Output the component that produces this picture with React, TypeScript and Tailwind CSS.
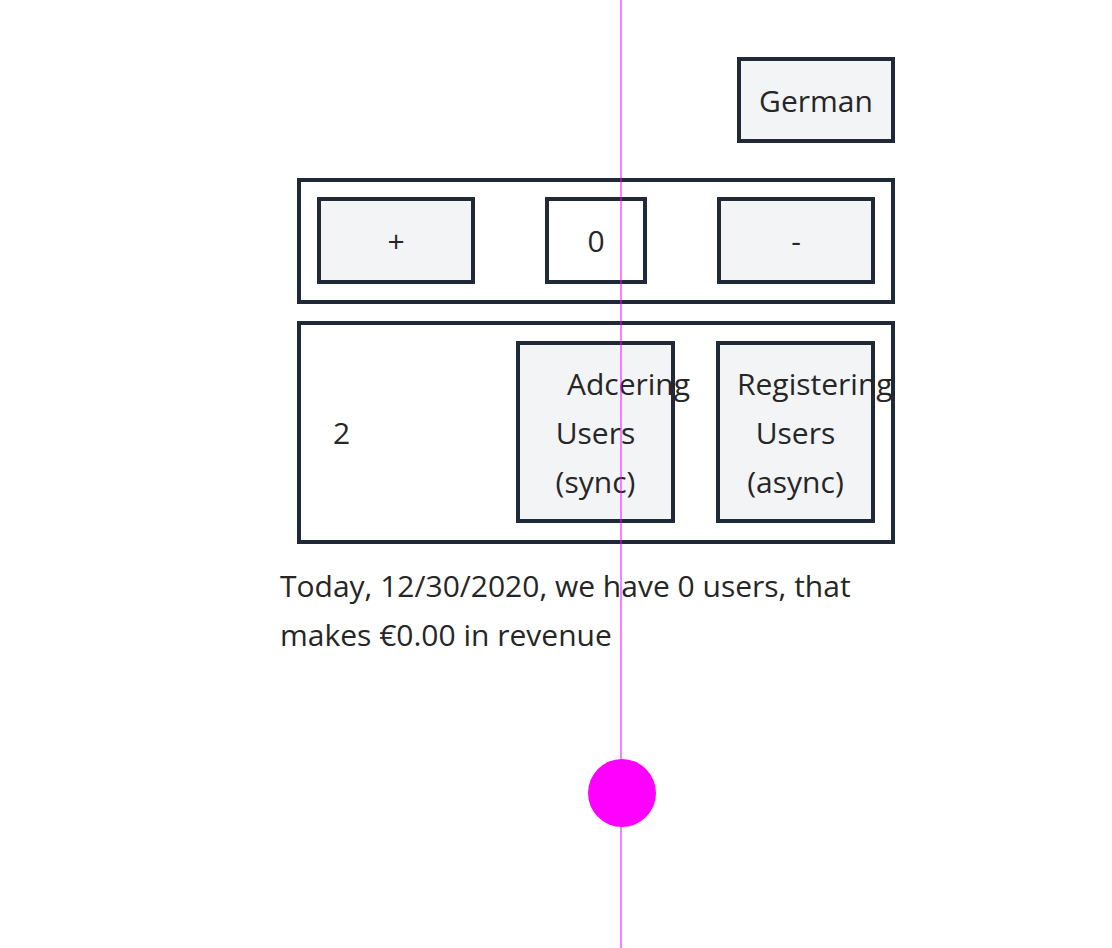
export default function App() {
  return (
    <div className="relative min-h-[948px] bg-white text-[30px] leading-[49px] text-[#262626] font-['Open_Sans',sans-serif]">
      <div className="ml-[280px] w-[615px] pt-[57px]">
        <div className="flex justify-end">
          <button className="w-[158px] h-[86px] border-[4px] border-[#1f2937] bg-[#f3f4f6]">German</button>
        </div>

        <div className="mt-[35px] ml-[17px] border-[4px] border-[#1f2937] px-[16px] pt-[15px] pb-[16px] flex justify-between items-center">
          <button className="w-[158px] h-[87px] border-[4px] border-[#1f2937] bg-[#f3f4f6]">+</button>
          <div className="w-[102px] h-[87px] border-[4px] border-[#1f2937] bg-white flex items-center justify-center">0</div>
          <button className="w-[158px] h-[87px] border-[4px] border-[#1f2937] bg-[#f3f4f6]">-</button>
        </div>

        <div className="mt-[17px] ml-[17px] border-[4px] border-[#1f2937] px-[16px] pt-[16px] pb-[17px] flex justify-between items-center">
          <div className="w-[158px] pl-[16px]">2</div>
          <button className="w-[159px] h-[182px] border-[4px] border-[#1f2937] bg-[#f3f4f6] px-[17px] flex flex-col justify-center">
            <span className="block text-left whitespace-nowrap pl-[30px]">Adcering</span>
            <span className="block text-center">Users</span>
            <span className="block text-center">(sync)</span>
          </button>
          <button className="w-[159px] h-[182px] border-[4px] border-[#1f2937] bg-[#f3f4f6] px-[17px] flex flex-col justify-center">
            <span className="block text-left whitespace-nowrap">Registering</span>
            <span className="block text-center">Users</span>
            <span className="block text-center">(async)</span>
          </button>
        </div>

        <p className="mt-[17px]">Today, 12/30/2020, we have 0 users, that makes €0.00 in revenue</p>
      </div>

      <div className="absolute left-[620px] top-0 w-[2px] h-[948px] bg-[#ff00ff]/50" />
      <div className="absolute left-[588px] top-[759px] w-[68px] h-[68px] rounded-full bg-[#ff00ff]" />
    </div>
  );
}
